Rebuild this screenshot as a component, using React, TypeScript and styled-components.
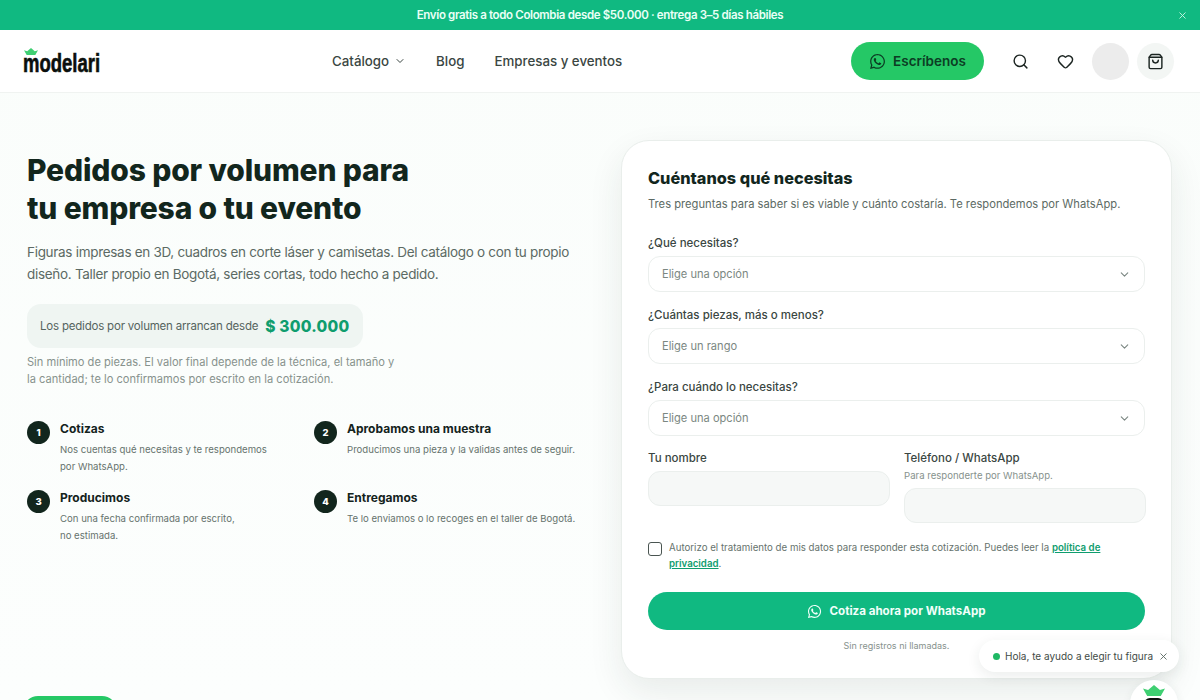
import React from "react";
import styled, { createGlobalStyle } from "styled-components";
import { ChevronDown, Heart, Search, ShoppingBag, X } from "lucide-react";
import { FaWhatsapp } from "react-icons/fa";

const GlobalStyle = createGlobalStyle`
  html, body {
    margin: 0;
    height: 100%;
    overflow: hidden;
  }
  body {
    font-family: Inter, "Noto Sans", sans-serif;
    background: #fbfdfc;
    color: #14231c;
  }
  * { box-sizing: border-box; }
`;

const Page = styled.div`
  position: relative;
  height: 700px;
  overflow: hidden;
  background: linear-gradient(180deg, #fafdfb 0%, #fcfefd 100%);
`;

const TopBar = styled.div`
  position: relative;
  height: 30px;
  background: #10b981;
  color: #eafff6;
  display: flex;
  align-items: center;
  justify-content: center;
  font-size: 11.5px;
  font-weight: 600;
  letter-spacing: -0.35px;
`;

const TopClose = styled.span`
  position: absolute;
  right: 12px;
  top: 10px;
  display: flex;
  color: #c8f5e3;
`;

const Header = styled.header`
  height: 63px;
  background: #fff;
  border-bottom: 1px solid #f0f3f1;
  padding: 0 26px 0 23px;
  display: flex;
  align-items: center;
`;

const Logo = styled.div`
  position: relative;
  width: 78px;
  height: 30px;
  font-family: "Liberation Sans", sans-serif;
  font-weight: 700;
  font-size: 25px;
  line-height: 25px;
  color: #0b0f0d;
  padding-top: 5px;
  white-space: nowrap;
`;

const LogoWord = styled.span`
  display: inline-block;
  transform: scaleX(0.74);
  transform-origin: left center;
  -webkit-text-stroke: 0.6px #0b0f0d;
`;

const LogoCrown = styled.span`
  position: absolute;
  left: 1px;
  top: 2px;
  display: flex;
`;

const Nav = styled.nav`
  display: flex;
  align-items: center;
  gap: 30px;
  margin-left: 231px;
`;

const NavItem = styled.a`
  display: flex;
  align-items: center;
  gap: 5px;
  font-size: 13.3px;
  font-weight: 500;
  color: #3a4642;
  text-decoration: none;
`;

const HeaderActions = styled.div`
  display: flex;
  align-items: center;
  margin-left: auto;
`;

const ChatButton = styled.button`
  width: 133px;
  height: 38px;
  border: 0;
  border-radius: 19px;
  background: #25c866;
  color: #0c3d24;
  display: flex;
  align-items: center;
  justify-content: center;
  gap: 7px;
  font: 600 13.5px Inter, sans-serif;
  margin-right: 18px;
`;

const IconSlot = styled.span`
  width: 36px;
  height: 36px;
  margin-right: 9px;
  display: flex;
  align-items: center;
  justify-content: center;
  color: #1b2421;
`;

const Avatar = styled.span`
  width: 37px;
  height: 37px;
  border-radius: 50%;
  background: #ececec;
  margin-right: 8px;
`;

const CartButton = styled.span`
  width: 37px;
  height: 37px;
  border-radius: 50%;
  background: #f3f6f4;
  display: flex;
  align-items: center;
  justify-content: center;
  color: #1b2421;
`;

const Main = styled.main`
  display: grid;
  grid-template-columns: 594px 551px;
  padding: 47px 28px 0 27px;
  align-items: start;
`;

const Intro = styled.section`
  padding-top: 11px;
`;

const Title = styled.h1`
  margin: 0 0 14px;
  font-size: 30px;
  line-height: 38px;
  font-weight: 800;
  letter-spacing: -0.15px;
  color: #12261d;
`;

const Lead = styled.p`
  margin: 0 0 19px;
  width: 545px;
  font-size: 13.5px;
  line-height: 22px;
  letter-spacing: -0.3px;
  color: #5c6a64;
`;

const PricePill = styled.div`
  width: 336px;
  height: 44px;
  border-radius: 14px;
  background: #eff5f2;
  padding: 0 13px;
  display: flex;
  align-items: center;
  gap: 7px;
  font-size: 11.5px;
  letter-spacing: -0.2px;
  color: #55645e;
  white-space: nowrap;
`;

const PriceValue = styled.strong`
  font-size: 15.5px;
  font-weight: 800;
  color: #0f9d6e;
  letter-spacing: 0.25px;
`;

const PriceNote = styled.p`
  margin: 6px 0 33px;
  width: 375px;
  font-size: 11.1px;
  line-height: 17px;
  color: #87928d;
`;

const Steps = styled.div`
  display: grid;
  grid-template-columns: 287px 1fr;
  row-gap: 15px;
`;

const Step = styled.div`
  display: flex;
  gap: 10px;
`;

const StepNumber = styled.span`
  flex: none;
  width: 23px;
  height: 23px;
  border-radius: 50%;
  background: #12261d;
  color: #fff;
  display: flex;
  align-items: center;
  justify-content: center;
  font-size: 9.5px;
  font-weight: 800;
`;

const StepTitle = styled.div`
  font-size: 12px;
  line-height: 15px;
  font-weight: 700;
  color: #14231c;
  margin-bottom: 5px;
`;

const StepText = styled.div`
  font-size: 9.6px;
  line-height: 17px;
  color: #66736d;
  white-space: pre-line;
`;

const Card = styled.section`
  height: 539px;
  background: #fff;
  border: 1px solid #e9eeeb;
  border-radius: 28px;
  box-shadow: 0 14px 34px rgba(30, 60, 45, 0.09);
  padding: 27px 26px 0;
`;

const CardTitle = styled.h2`
  margin: 0 0 7px;
  font-size: 16.3px;
  line-height: 20px;
  font-weight: 800;
  color: #12261d;
`;

const CardLead = styled.p`
  margin: 0 0 22px;
  font-size: 11.2px;
  line-height: 18px;
  color: #5c6a64;
`;

const Field = styled.div`
  margin-bottom: 15px;
`;

const Label = styled.label`
  display: block;
  font-size: 11.5px;
  line-height: 16px;
  font-weight: 500;
  color: #3a4642;
  margin-bottom: 5px;
`;

const Select = styled.div`
  height: 36px;
  border: 1px solid #ebefed;
  border-radius: 12px;
  background: #fff;
  padding: 0 13px;
  display: flex;
  align-items: center;
  justify-content: space-between;
  font-size: 11.1px;
  color: #7b8782;
`;

const TwoCols = styled.div`
  display: grid;
  grid-template-columns: 242px 242px;
  column-gap: 14px;
  height: 91px;
  margin-top: -1px;
`;

const Hint = styled.div`
  font-size: 9.6px;
  line-height: 13px;
  color: #87928d;
  margin: -2px 0 6px;
`;

const Input = styled.div`
  height: 35px;
  border: 1px solid #ebefed;
  border-radius: 12px;
  background: #f6f8f7;
`;

const Consent = styled.div`
  display: flex;
  gap: 7px;
  margin-top: -1px;
  margin-bottom: 20px;
`;

const CheckBox = styled.span`
  flex: none;
  width: 14px;
  height: 14px;
  border: 1px solid #4a5551;
  border-radius: 3px;
  margin-top: 2px;
`;

const ConsentText = styled.p`
  margin: 0;
  font-size: 9.7px;
  line-height: 16px;
  color: #66736d;
`;

const PolicyLink = styled.a`
  color: #0f9d6e;
  font-weight: 600;
  text-decoration: underline;
`;

const SubmitButton = styled.button`
  width: 100%;
  height: 38px;
  border: 0;
  border-radius: 19px;
  background: #10b981;
  color: #f2fffa;
  display: flex;
  align-items: center;
  justify-content: center;
  gap: 7px;
  font: 700 11.6px Inter, sans-serif;
`;

const SubmitNote = styled.p`
  margin: 9px 0 0;
  text-align: center;
  font-size: 9px;
  line-height: 13px;
  color: #87928d;
`;

const Toast = styled.div`
  position: absolute;
  left: 979px;
  top: 640px;
  width: 200px;
  height: 32px;
  border-radius: 16px;
  background: #fff;
  box-shadow: 0 4px 14px rgba(30, 60, 45, 0.09);
  padding: 0 11px 0 14px;
  display: flex;
  align-items: center;
  gap: 5px;
  font-size: 10px;
  color: #3f4b46;
  white-space: nowrap;
`;

const ToastDot = styled.span`
  flex: none;
  width: 7px;
  height: 7px;
  border-radius: 50%;
  background: #1fb864;
`;

const ToastClose = styled.span`
  margin-left: auto;
  display: flex;
  color: #5c6a64;
`;

const FloatingPill = styled.div`
  position: absolute;
  left: 23px;
  top: 696px;
  width: 94px;
  height: 30px;
  border-radius: 15px;
  background: #25c866;
`;

const Mascot = styled.div`
  position: absolute;
  left: 1130px;
  top: 680px;
  width: 48px;
  height: 48px;
  border-radius: 50%;
  background: #fff;
  box-shadow: 0 2px 10px rgba(30, 60, 45, 0.08);
  display: flex;
  flex-direction: column;
  align-items: center;
  padding-top: 5px;
  gap: 2px;
`;

const MascotBody = styled.span`
  width: 20px;
  height: 12px;
  border-radius: 8px;
  background: #0b0f0d;
`;

const Crown: React.FC<{ size: number }> = ({ size }) => (
  <svg width={size} height={size * 0.5} viewBox="0 0 26 13">
    <path d="M0 4l6 2 7-6 7 6 6-2-5 9H5z" fill="#3fcf72" />
  </svg>
);

const steps = [
  { n: 1, title: "Cotizas", text: "Nos cuentas qué necesitas y te respondemos\npor WhatsApp." },
  { n: 2, title: "Aprobamos una muestra", text: "Producimos una pieza y la validas antes de seguir." },
  { n: 3, title: "Producimos", text: "Con una fecha confirmada por escrito,\nno estimada." },
  { n: 4, title: "Entregamos", text: "Te lo enviamos o lo recoges en el taller de Bogotá." },
];

const selects = [
  { label: "¿Qué necesitas?", placeholder: "Elige una opción" },
  { label: "¿Cuántas piezas, más o menos?", placeholder: "Elige un rango" },
  { label: "¿Para cuándo lo necesitas?", placeholder: "Elige una opción" },
];

const App: React.FC = () => {
  return (
    <Page>
      <GlobalStyle />
      <TopBar>
        Envío gratis a todo Colombia desde $50.000 · entrega 3–5 días hábiles
        <TopClose>
          <X size={11} />
        </TopClose>
      </TopBar>
      <Header>
        <Logo>
          <LogoWord>modelari</LogoWord>
          <LogoCrown>
            <Crown size={14} />
          </LogoCrown>
        </Logo>
        <Nav>
          <NavItem href="#">
            Catálogo <ChevronDown size={12} />
          </NavItem>
          <NavItem href="#">Blog</NavItem>
          <NavItem href="#">Empresas y eventos</NavItem>
        </Nav>
        <HeaderActions>
          <ChatButton>
            <FaWhatsapp size={17} />
            Escríbenos
          </ChatButton>
          <IconSlot>
            <Search size={17} />
          </IconSlot>
          <IconSlot>
            <Heart size={17} />
          </IconSlot>
          <Avatar />
          <CartButton>
            <ShoppingBag size={17} />
          </CartButton>
        </HeaderActions>
      </Header>
      <Main>
        <Intro>
          <Title>
            Pedidos por volumen para
            <br />
            tu empresa o tu evento
          </Title>
          <Lead>
            Figuras impresas en 3D, cuadros en corte láser y camisetas. Del catálogo o con tu propio
            diseño. Taller propio en Bogotá, series cortas, todo hecho a pedido.
          </Lead>
          <PricePill>
            Los pedidos por volumen arrancan desde
            <PriceValue>$ 300.000</PriceValue>
          </PricePill>
          <PriceNote>
            Sin mínimo de piezas. El valor final depende de la técnica, el tamaño y la cantidad; te lo
            confirmamos por escrito en la cotización.
          </PriceNote>
          <Steps>
            {steps.map((s) => (
              <Step key={s.n}>
                <StepNumber>{s.n}</StepNumber>
                <div>
                  <StepTitle>{s.title}</StepTitle>
                  <StepText>{s.text}</StepText>
                </div>
              </Step>
            ))}
          </Steps>
        </Intro>
        <Card>
          <CardTitle>Cuéntanos qué necesitas</CardTitle>
          <CardLead>
            Tres preguntas para saber si es viable y cuánto costaría. Te respondemos por WhatsApp.
          </CardLead>
          {selects.map((f) => (
            <Field key={f.label}>
              <Label>{f.label}</Label>
              <Select>
                {f.placeholder}
                <ChevronDown size={13} />
              </Select>
            </Field>
          ))}
          <TwoCols>
            <div>
              <Label>Tu nombre</Label>
              <Input />
            </div>
            <div>
              <Label>Teléfono / WhatsApp</Label>
              <Hint>Para responderte por WhatsApp.</Hint>
              <Input />
            </div>
          </TwoCols>
          <Consent>
            <CheckBox />
            <ConsentText>
              Autorizo el tratamiento de mis datos para responder esta cotización. Puedes leer la{" "}
              <PolicyLink href="#">política de privacidad</PolicyLink>.
            </ConsentText>
          </Consent>
          <SubmitButton>
            <FaWhatsapp size={15} />
            Cotiza ahora por WhatsApp
          </SubmitButton>
          <SubmitNote>Sin registros ni llamadas.</SubmitNote>
        </Card>
      </Main>
      <FloatingPill />
      <Toast>
        <ToastDot />
        Hola, te ayudo a elegir tu figura
        <ToastClose>
          <X size={11} />
        </ToastClose>
      </Toast>
      <Mascot>
        <Crown size={22} />
        <MascotBody />
      </Mascot>
    </Page>
  );
};

export default App;
